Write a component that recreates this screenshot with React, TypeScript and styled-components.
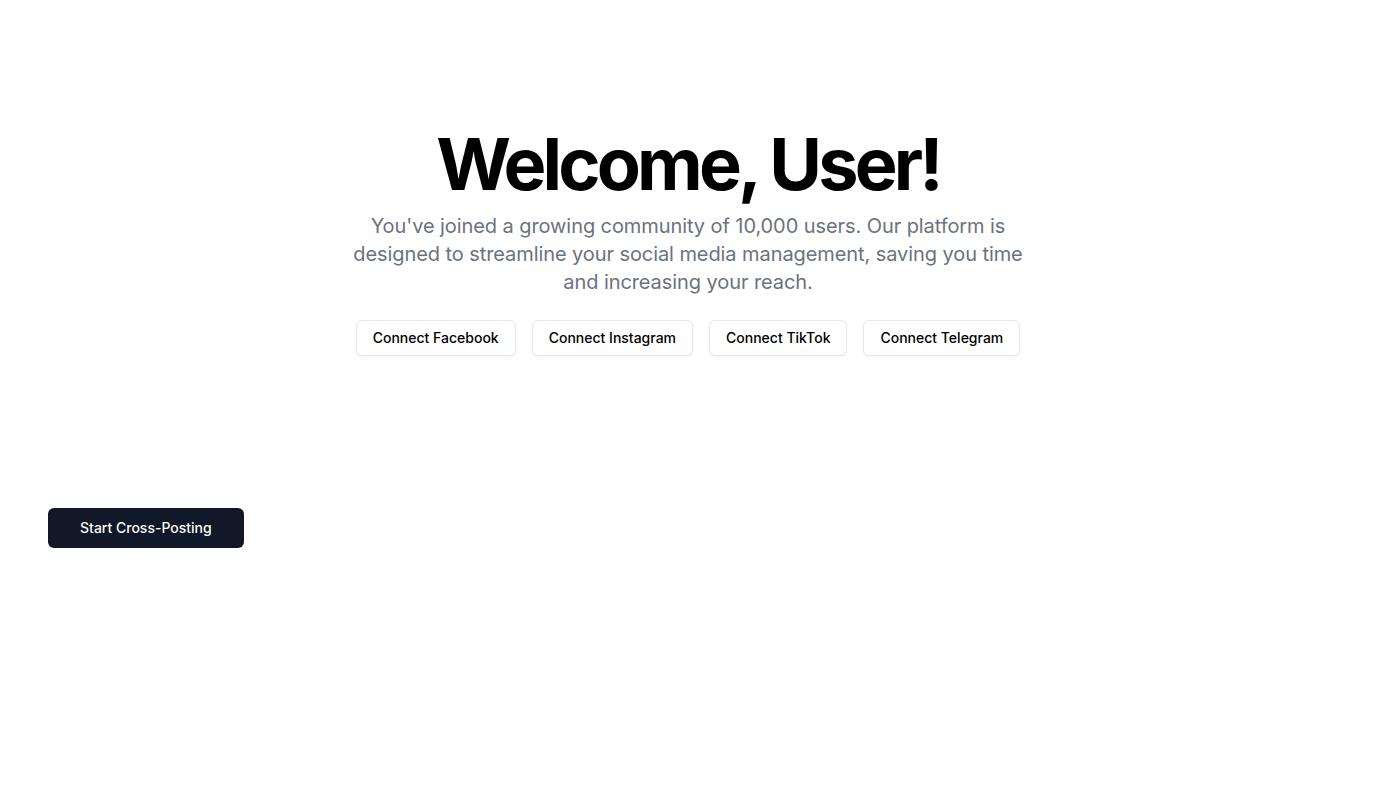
import React from "react";
import styled, { createGlobalStyle } from "styled-components";

const Global = createGlobalStyle`
  html, body { margin: 0; padding: 0; background: #ffffff; }
  body { font-family: Inter, "Noto Sans", sans-serif; color: #000; -webkit-font-smoothing: antialiased; }
  * { box-sizing: border-box; }
`;

const Page = styled.main`
  display: flex;
  flex-direction: column;
  width: 100%;
`;

const Hero = styled.section`
  display: flex;
  flex-direction: column;
  align-items: center;
  padding: 128px 16px 128px;
  text-align: center;
`;

const Title = styled.h1`
  margin: 0;
  font-size: 72px;
  line-height: 1;
  font-weight: 700;
  letter-spacing: -0.053em;
  color: #000;
`;

const Lead = styled.p`
  margin: 12px 0 0;
  max-width: 700px;
  font-size: 20px;
  line-height: 28px;
  letter-spacing: -0.08px;
  color: #6b7280;
`;

const ButtonRow = styled.div`
  display: flex;
  gap: 16px;
  margin-top: 24px;
`;

const OutlineButton = styled.button`
  height: 36px;
  padding: 0 16px;
  border: 1px solid #e5e7eb;
  border-radius: 6px;
  background: #fff;
  box-shadow: 0 1px 2px rgba(0, 0, 0, 0.05);
  font-family: Inter, sans-serif;
  font-size: 14px;
  line-height: 20px;
  font-weight: 500;
  color: #000;
  cursor: pointer;
`;

const Footer = styled.div`
  display: flex;
  padding: 24px 48px;
`;

const PrimaryButton = styled.button`
  height: 40px;
  padding: 0 32px;
  border: none;
  border-radius: 6px;
  background: #111827;
  font-family: Inter, sans-serif;
  font-size: 14px;
  line-height: 20px;
  font-weight: 500;
  color: #f9fafb;
  cursor: pointer;
`;

const networks = ["Facebook", "Instagram", "TikTok", "Telegram"];

export default function App() {
  return (
    <>
      <Global />
      <Page>
        <Hero>
          <Title>Welcome, User!</Title>
          <Lead>
            You've joined a growing community of 10,000 users. Our platform is designed to
            streamline your social media management, saving you time and increasing your reach.
          </Lead>
          <ButtonRow>
            {networks.map((n) => (
              <OutlineButton key={n}>Connect {n}</OutlineButton>
            ))}
          </ButtonRow>
        </Hero>
        <Footer>
          <PrimaryButton>Start Cross-Posting</PrimaryButton>
        </Footer>
      </Page>
    </>
  );
}
